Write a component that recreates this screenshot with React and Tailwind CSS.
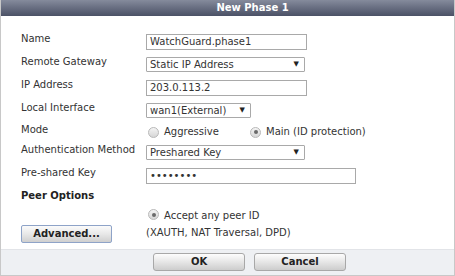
import React from "react";

function Radio({ checked }) {
  return (
    <span className="inline-flex w-[11px] h-[11px] rounded-full border border-[#b8b8b8] bg-gradient-to-b from-[#f4f4f4] to-[#d6d6d6] items-center justify-center shrink-0">
      {checked ? <span className="w-[4px] h-[4px] rounded-full bg-[#6a6a6a]" /> : null}
    </span>
  );
}

function Select({ value, w }) {
  return (
    <div className={`${w} h-[15px] border border-[#a9a9a9] bg-white flex items-center justify-between pl-[3px] pr-[5px] rounded-[1px]`}>
      <span className="leading-none">{value}</span>
      <span className="text-[7px] leading-none text-[#222]">▼</span>
    </div>
  );
}

function Input({ value, w }) {
  return (
    <div className={`${w} h-[16px] border border-[#a9a9a9] bg-white flex items-center pl-[3px]`}>
      <span className="leading-none">{value}</span>
    </div>
  );
}

function Row({ label, h, children }) {
  return (
    <div className={`flex items-center ${h}`}>
      <div className="w-[125px] pb-[5px] leading-none">{label}</div>
      {children}
    </div>
  );
}

export default function App() {
  return (
    <div
      className="w-[455px] h-[276px] bg-white text-[10px] text-[#333] flex flex-col border-x border-b border-[#c8c8c8] overflow-hidden"
      style={{ fontFamily: '"DejaVu Sans", Verdana, sans-serif' }}
    >
      <div className="h-[16px] bg-gradient-to-b from-[#858b9c] to-[#4b5166] flex items-center justify-center pl-[50px] shrink-0">
        <span className="text-white font-bold leading-none">New Phase 1</span>
      </div>
      <div className="flex flex-col pl-[20px] pt-[14px]">
        <Row label="Name" h="h-[23px]">
          <Input value="WatchGuard.phase1" w="w-[161px]" />
        </Row>
        <Row label="Remote Gateway" h="h-[23px]">
          <Select value="Static IP Address" w="w-[159px]" />
        </Row>
        <Row label="IP Address" h="h-[23px]">
          <Input value="203.0.113.2" w="w-[161px]" />
        </Row>
        <Row label="Local Interface" h="h-[23px]">
          <Select value="wan1(External)" w="w-[105px]" />
        </Row>
        <Row label="Mode" h="h-[20px]">
          <div className="flex items-center pl-[2px]">
            <Radio />
            <span className="ml-[5px] w-[86px] leading-none">Aggressive</span>
            <Radio checked />
            <span className="ml-[5px] leading-none">Main (ID protection)</span>
          </div>
        </Row>
        <Row label="Authentication Method" h="h-[21px]">
          <Select value="Preshared Key" w="w-[159px]" />
        </Row>
        <Row label="Pre-shared Key" h="h-[25px]">
          <Input value="••••••••" w="w-[210px]" />
        </Row>
        <div className="h-[16px] flex items-center">
          <span className="font-bold text-[#222] leading-none">Peer Options</span>
        </div>
        <div className="h-[21px] flex items-center pl-[127px]">
          <Radio checked />
          <span className="ml-[5px] leading-none pt-[3px]">Accept any peer ID</span>
        </div>
        <div className="h-[18px] flex items-center">
          <button className="w-[91px] h-[18px] border border-[#8ea3c8] rounded-[2px] bg-gradient-to-b from-[#fbfbfb] via-[#e8e8e8] to-[#cfcfcf] font-bold text-[#222] leading-none flex items-center justify-center">
            Advanced...
          </button>
          <span className="ml-[34px] leading-none pb-[2px]">(XAUTH, NAT Traversal, DPD)</span>
        </div>
      </div>
      <div className="mt-[6px] flex-1 bg-[#eef0f3] border-t border-[#e2e4e8] flex items-start justify-center gap-[9px] pt-[3px] pl-[44px]">
        <button className="w-[92px] h-[18px] border border-[#a8a8a8] rounded-[3px] bg-gradient-to-b from-[#fdfdfd] via-[#e6e6e6] to-[#cdcdcd] font-bold text-[#222] leading-none flex items-center justify-center">
          OK
        </button>
        <button className="w-[92px] h-[18px] border border-[#a8a8a8] rounded-[3px] bg-gradient-to-b from-[#fdfdfd] via-[#e6e6e6] to-[#cdcdcd] font-bold text-[#222] leading-none flex items-center justify-center">
          Cancel
        </button>
      </div>
    </div>
  );
}
